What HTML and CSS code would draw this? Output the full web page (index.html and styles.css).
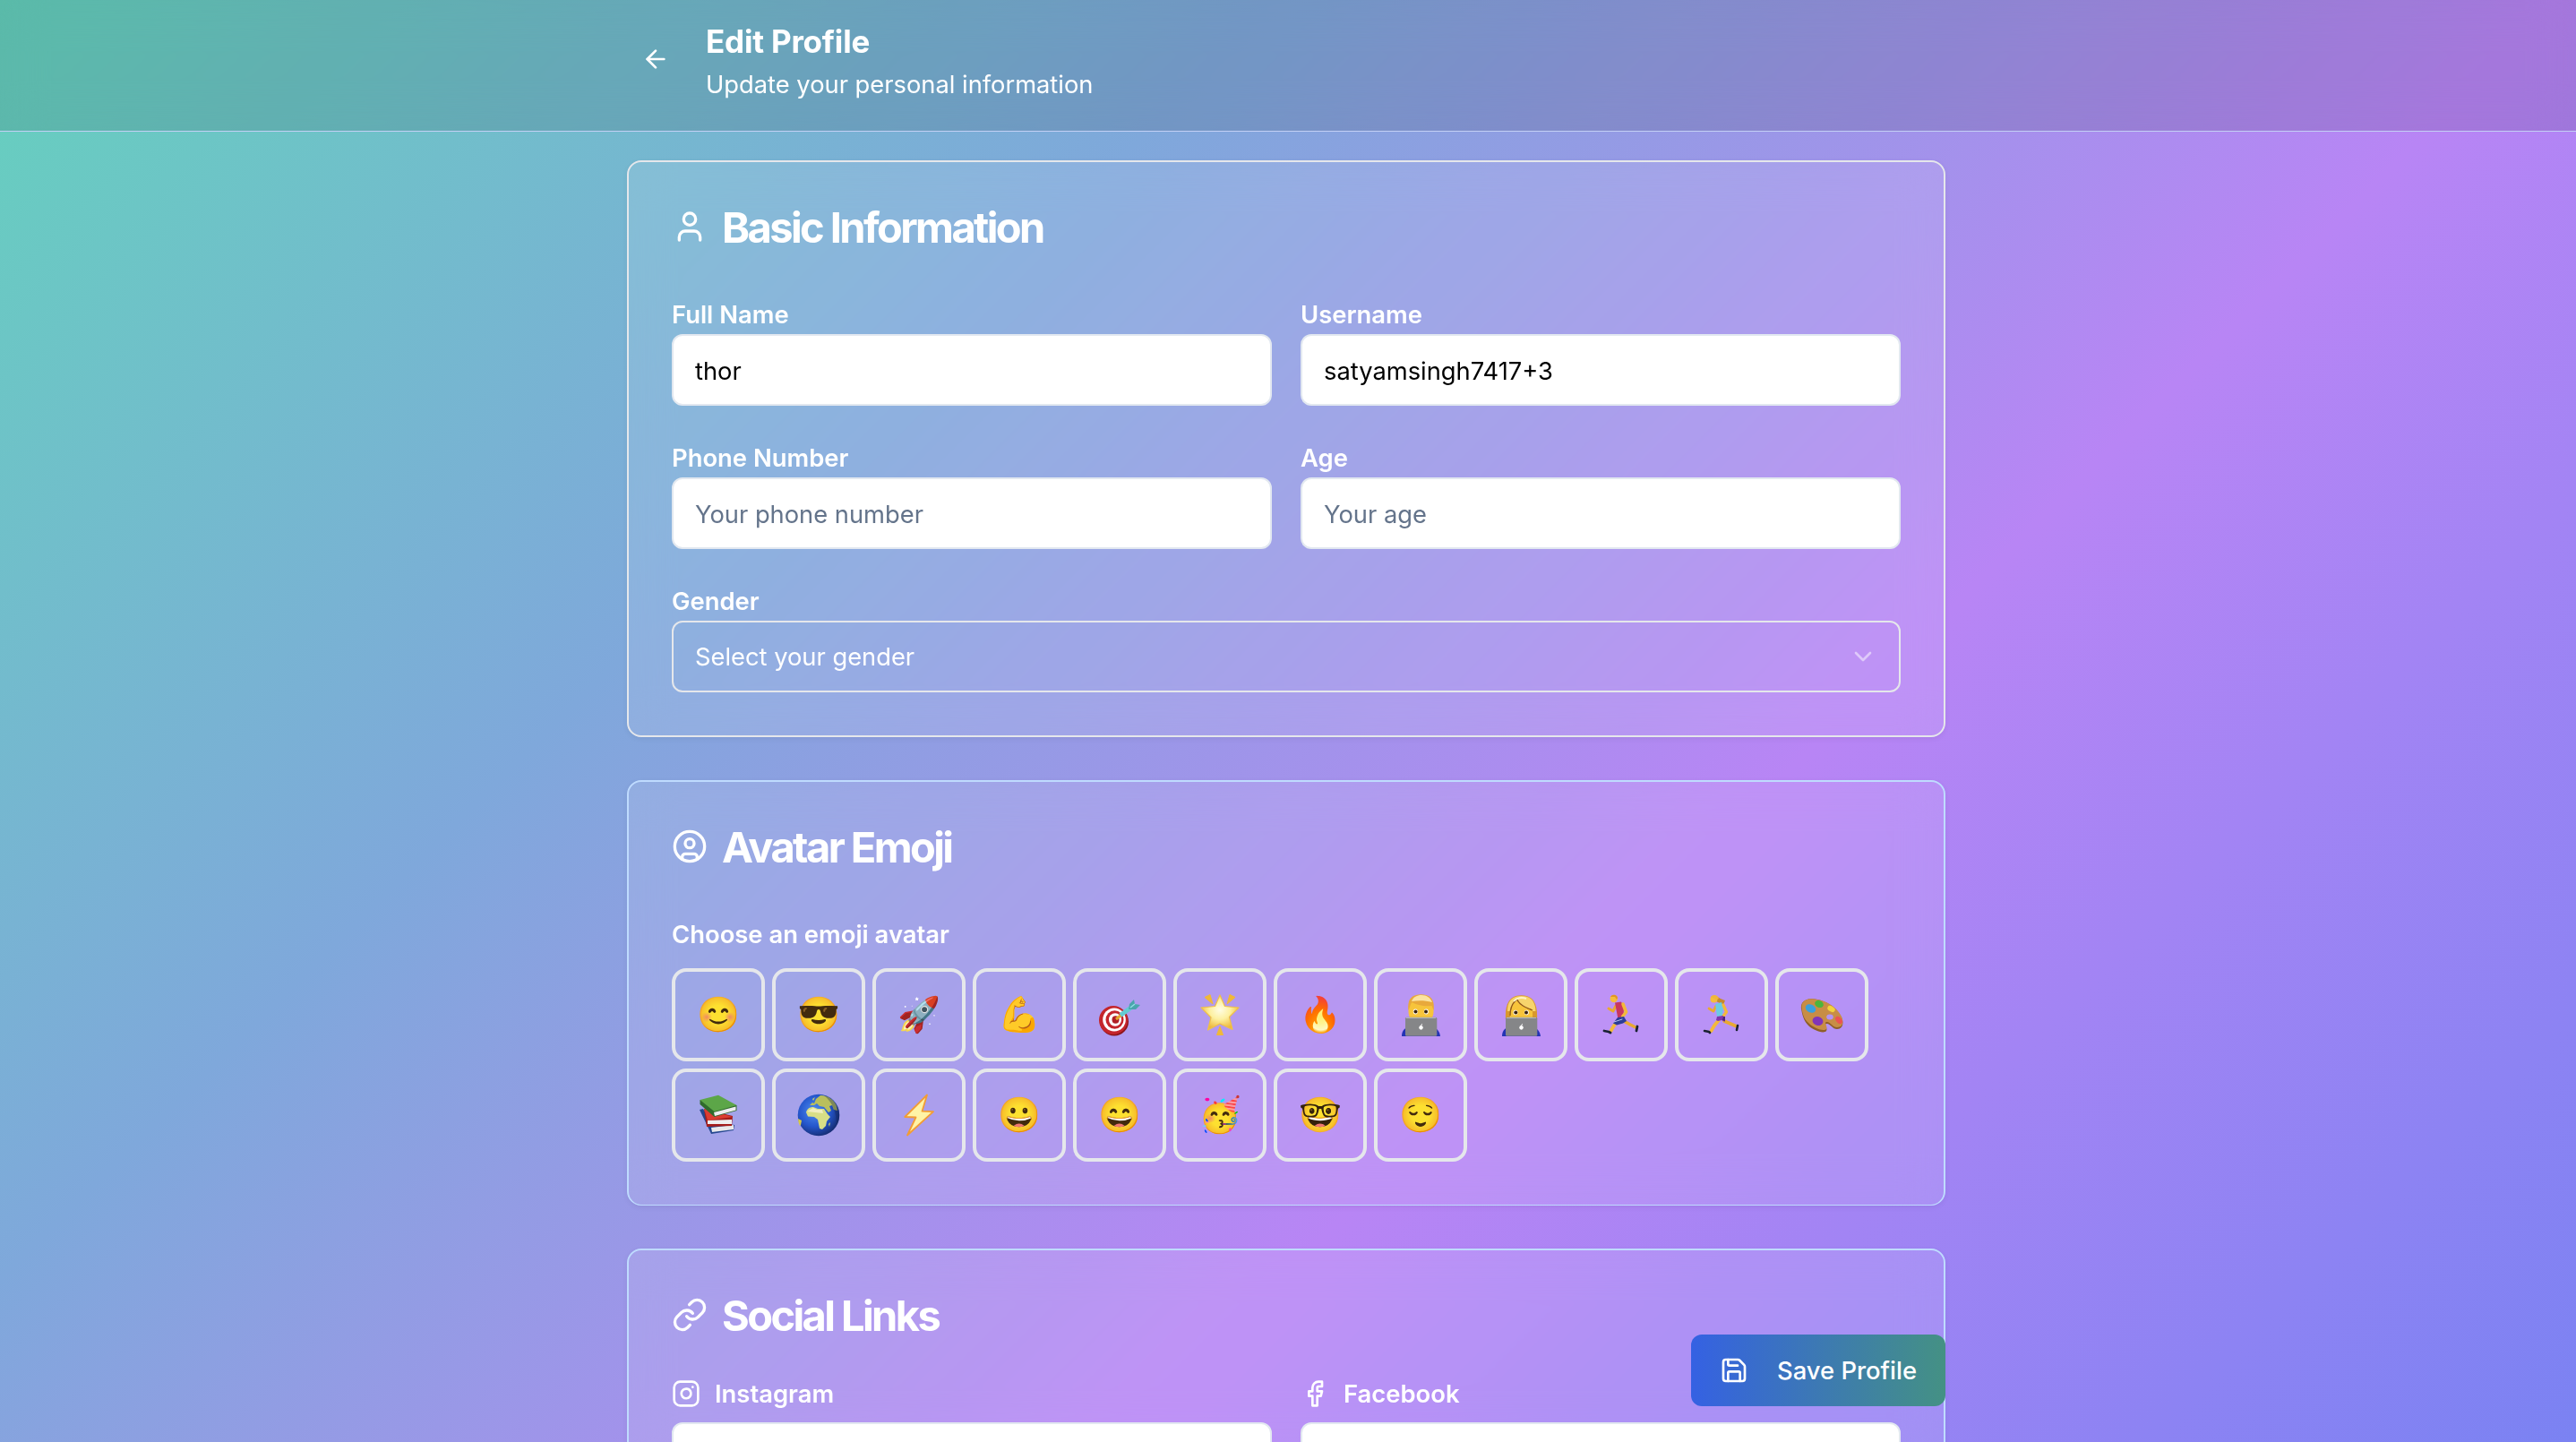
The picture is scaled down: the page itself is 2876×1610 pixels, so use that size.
FILE: index.html
```
<!DOCTYPE html>
<html lang="en">
<head>
<meta charset="utf-8">
<title>Edit Profile</title>
<link rel="stylesheet" href="styles.css">
</head>
<body>
<div class="page">
  <header class="topbar">
    <div class="topbar-inner">
      <button class="back" aria-label="Back">
        <svg class="icon icon-32" viewBox="0 0 24 24"><path d="m12 19-7-7 7-7"/><path d="M19 12H5"/></svg>
      </button>
      <div>
        <h1 class="title">Edit Profile</h1>
        <p class="subtitle">Update your personal information</p>
      </div>
    </div>
  </header>

  <main class="content">
    <section class="card card-basic">
      <h2 class="card-title">
        <svg class="icon icon-40" viewBox="0 0 24 24"><path d="M19 21v-2a4 4 0 0 0-4-4H9a4 4 0 0 0-4 4v2"/><circle cx="12" cy="7" r="4"/></svg>
        <span>Basic Information</span>
      </h2>
      <div class="fields">
        <label class="field"><span class="label">Full Name</span><input class="input" type="text" value="thor"></label>
        <label class="field"><span class="label">Username</span><input class="input" type="text" value="satyamsingh7417+3"></label>
        <label class="field"><span class="label">Phone Number</span><input class="input" type="text" placeholder="Your phone number"></label>
        <label class="field"><span class="label">Age</span><input class="input" type="text" placeholder="Your age"></label>
        <div class="field field-wide">
          <span class="label">Gender</span>
          <div class="select">
            <span>Select your gender</span>
            <svg class="icon icon-32 chevron" viewBox="0 0 24 24"><path d="m6 9 6 6 6-6"/></svg>
          </div>
        </div>
      </div>
    </section>

    <section class="card card-avatar">
      <h2 class="card-title">
        <svg class="icon icon-40" viewBox="0 0 24 24"><circle cx="12" cy="12" r="10"/><circle cx="12" cy="10" r="3"/><path d="M7 20.662V19a2 2 0 0 1 2-2h6a2 2 0 0 1 2 2v1.662"/></svg>
        <span>Avatar Emoji</span>
      </h2>
      <span class="label label-emoji">Choose an emoji avatar</span>
      <div class="emojis">
        <button class="emoji">😊</button>
        <button class="emoji">😎</button>
        <button class="emoji">🚀</button>
        <button class="emoji">💪</button>
        <button class="emoji" aria-label="🎯">
          <svg class="art" viewBox="0 0 48 48">
            <ellipse cx="18" cy="31.500" rx="16" ry="16" fill="#8c1519"/>
            <ellipse cx="17" cy="30" rx="16" ry="16" fill="#c4252b"/>
            <ellipse cx="18" cy="29.500" rx="12.800" ry="13" fill="#fff"/>
            <ellipse cx="18.500" cy="29.500" rx="10" ry="10.300" fill="#c4252b"/>
            <ellipse cx="19" cy="29.500" rx="7" ry="7.300" fill="#fff"/>
            <ellipse cx="19.500" cy="29.500" rx="4" ry="4.200" fill="#b01f25"/>
            <path d="m20 29 6-5" stroke="#e5a72c" stroke-width="3"/>
            <path d="m25 24.500 11-8" stroke="#64cbd3" stroke-width="5"/>
            <path d="m34 18 1-6 5-5 1 5 6 1-5 5Z" fill="#4aa5ad"/>
            <path d="m36 16 5-4" stroke="#90e0e4" stroke-width="1.500"/>
          </svg>
        </button>
        <button class="emoji" aria-label="🌟">
          <svg class="art" viewBox="0 0 48 48">
            <defs><radialGradient id="star" cx=".5" cy=".42" r=".55"><stop offset="0" stop-color="#fffde4"/><stop offset=".5" stop-color="#fdf0a0"/><stop offset="1" stop-color="#eeb93c"/></radialGradient></defs>
            <path d="m7 4.500 6-3 3 10.500Zm34 0-6-3L32 12ZM20.500 46.500 24 37l3.500 9.500Z" fill="#f0b838" stroke="#f0b838" stroke-linejoin="round"/>
            <path d="m24 2 5.500 12.500L45 16 34.500 26.500 38 40.500l-14-6.500-13.500 7L14 27 3 16l15.500-1.500Z" fill="url(#star)" stroke="#efc048" stroke-width="1.200" stroke-linejoin="round"/>
          </svg>
        </button>
        <button class="emoji">🔥</button>
        <button class="emoji" aria-label="👨‍💻">
          <svg class="art" viewBox="0 0 48 48">
            <path d="M3 48c0-7 4-10 10-11h22c6 1 10 4 11 11Z" fill="#2433b5"/>
            <rect x="10.500" y="6" width="28" height="27" rx="12" fill="#f7c43b"/>
            <path d="M10.500 19C9 8 13 1.300 24.500 1.300S40 8 38.500 19l-2-5c-8 1-17-1-22-4-2 2-2 5-4 9Z" fill="#e8a93b"/>
            <path d="M14 9c2-5 6-7 11-7 6 0 10 3 12 8-8-2-15-2-23-1Z" fill="#fbe3a0"/>
            <ellipse cx="18.300" cy="20.500" rx="2.500" ry="3" fill="#fff"/><ellipse cx="30.300" cy="20.500" rx="2.500" ry="3" fill="#fff"/>
            <circle cx="18.500" cy="20.500" r="2" fill="#3a230c"/><circle cx="30" cy="20.500" r="2" fill="#3a230c"/>
            <rect x="7" y="26.700" width="35.300" height="21" rx="1.500" fill="#858688"/>
            <path d="M8 27.500h33" stroke="#b5b6b8" stroke-width="1.200"/>
            <ellipse cx="24.500" cy="38.300" rx="2.200" ry="2.400" fill="#fff"/><path d="m24.500 36 1.200-1.800" stroke="#fff"/>
          </svg>
        </button>
        <button class="emoji" aria-label="👩‍💻">
          <svg class="art" viewBox="0 0 48 48">
            <path d="M3 48c0-7 4-10 10-11h22c6 1 10 4 11 11Z" fill="#2433b5"/>
            <path d="M7 29C6 12 11 2.300 24.500 2.300S43 12 42 29Z" fill="#d9982c"/>
            <path d="M9 20C9 9 14 3 24.500 3S40 9 40.500 20Z" fill="#f7d46c"/>
            <path d="M12 28c-1-9 2-16 8-20 2 6 10 8 17 11v9Z" fill="#f7c43b"/>
            <path d="M20 7c2 6 10 9 17 12M20 7c-5 3-8 9-8 18" fill="none" stroke="#8f5517" stroke-width="1.300"/>
            <path d="M16 9c3-4 9-5 14-3" fill="none" stroke="#fff3c4" stroke-width="2"/>
            <ellipse cx="18" cy="21.500" rx="2.500" ry="2.800" fill="#fff"/><ellipse cx="30.300" cy="21.500" rx="2.500" ry="2.800" fill="#fff"/>
            <circle cx="18.300" cy="21.500" r="2" fill="#3a230c"/><circle cx="30" cy="21.500" r="2" fill="#3a230c"/>
            <rect x="7" y="26.700" width="35.300" height="21" rx="1.500" fill="#858688"/>
            <path d="M8 27.500h33" stroke="#b5b6b8" stroke-width="1.200"/>
            <ellipse cx="24.500" cy="38.300" rx="2.200" ry="2.400" fill="#fff"/><path d="m24.500 36 1.200-1.800" stroke="#fff"/>
          </svg>
        </button>
        <button class="emoji" aria-label="🏃‍♂️">
          <svg class="art" viewBox="0 0 48 48" fill="none" stroke-linecap="round" stroke-linejoin="round">
            <path d="m18 14-3 6-5-3" stroke="#e9a931" stroke-width="3"/>
            <path d="m27 31 7 4 6 3" stroke="#e9a931" stroke-width="3.600"/>
            <path d="m20 32-4 4-3.500 6" stroke="#f3b93a" stroke-width="3.800"/>
            <path d="m17 10.500 7-1 3 6-.500 12-6 1.500Z" fill="#c9375f"/>
            <path d="m26 12 3.500 9-4 5" stroke="#f3b93a" stroke-width="3.600"/>
            <path d="m20 27 7-1 3 5-4 2.500-7 2-4-2Z" fill="#2b3d97"/>
            <path d="m16 32 9-3" stroke="#b7c4ea" stroke-width="1"/>
            <circle cx="15.800" cy="6" r="4.200" fill="#f5bd3c"/><path d="M12 4c2-3 7-3 8 1l-1 2-2-3Z" fill="#e09524"/>
            <path d="m5 42 5 1 2 1M42 37l-1 5" stroke="#1b2233" stroke-width="2.800"/>
          </svg>
        </button>
        <button class="emoji" aria-label="🏃‍♀️">
          <svg class="art" viewBox="0 0 48 48" fill="none" stroke-linecap="round" stroke-linejoin="round">
            <path d="M17 3c5 2 7 4 11 5l-2 5-8-4Z" fill="#c68a2c"/>
            <path d="m18 14-3 6-5-3" stroke="#e9a931" stroke-width="2.800"/>
            <path d="m27 31 7 3 7 3" stroke="#e9a931" stroke-width="3.600"/>
            <path d="m21 30-5 6-3.500 6" stroke="#f3b93a" stroke-width="3.800"/>
            <path d="m17 12 7-2 2 6-1 9-6 1Z" fill="#6ccbe4"/>
            <path d="m26 13 3.500 8-4 5" stroke="#f3b93a" stroke-width="3.200"/>
            <path d="m19 26 7-1 2 7-4-2-4 1-2-1Z" fill="#7e35ad"/>
            <path d="m26 26 2 0 0 5-3-1Z" fill="#4c2378"/>
            <circle cx="15.500" cy="6.500" r="4" fill="#f5bd3c"/><path d="M12 4c2-3 8-3 9 2l-3 1Z" fill="#efb63c"/>
            <path d="m5 42 5 1 1 1M42 36l-1 5" stroke="#1b2233" stroke-width="2.600"/>
          </svg>
        </button>
        <button class="emoji" aria-label="🎨">
          <svg class="art" viewBox="0 0 48 48">
            <path d="M1 17C0 9 7 5 16 6.500 28 8 40 15 46 27c3 7 1 13-5 13-5 0-8-7-12-6-3 1 2 5 0 8-3 4-15-1-20-6C4 31 2 24 1 17Z" fill="#8f5f26"/>
            <path d="M1.500 15.500C1 9 7 5 16 6.500 28 8 40 14 46 26c3 7 1 12-5 12-5 0-8-7-12-6-3 1 2 5 0 8-3 3-14-1-20-7C4 29 2 22 1.500 15.500Z" fill="#c88d45"/>
            <ellipse cx="33" cy="26.500" rx="3.800" ry="3" fill="#b393f3"/>
            <ellipse cx="11.500" cy="17" rx="6" ry="4.500" transform="rotate(25 11.500 17)" fill="#3aa0dc"/>
            <ellipse cx="21" cy="12" rx="5" ry="3.800" transform="rotate(25 21 12)" fill="#4bb53c"/>
            <ellipse cx="34.500" cy="17.500" rx="4.500" ry="3" transform="rotate(30 34.500 17.500)" fill="#f2d23e"/>
            <ellipse cx="43" cy="30" rx="4.800" ry="3" transform="rotate(50 43 30)" fill="#ec5350"/>
            <ellipse cx="19.500" cy="31" rx="6" ry="4.800" transform="rotate(15 19.500 31)" fill="#8135b8"/>
          </svg>
        </button>
        <button class="emoji" aria-label="📚">
          <svg class="art" viewBox="0 0 48 48">
            <path d="m3 18 4-1 9 15 26 3-1 6-25 4Z" fill="#24478f"/>
            <path d="m16 38 25-3v5l-24 3Z" fill="#e8e8ea"/>
            <path d="m8 17 32 8-1 11-28 1Z" fill="#a51d1c"/>
            <path d="m8 17 32 9-28 4Z" fill="#db3c31"/>
            <path d="m12 30 27-1v5H12Z" fill="#eeeeef"/>
            <path d="M3.500 7v5l16 14 25-7V13Z" fill="#2f6b2c"/>
            <path d="M3.500 7 24 1.700 44.500 13l-25 7Z" fill="#5ca648"/>
            <path d="m19 21 24.500-6.500v4L20 25Z" fill="#eeeeef"/>
          </svg>
        </button>
        <button class="emoji" aria-label="🌍">
          <svg class="art" viewBox="0 0 48 48">
            <defs><radialGradient id="sea" cx=".4" cy=".4" r=".62"><stop offset="0" stop-color="#4f8df0"/><stop offset=".6" stop-color="#2456cc"/><stop offset="1" stop-color="#172f78"/></radialGradient></defs>
            <circle cx="24" cy="24" r="23.300" fill="url(#sea)"/>
            <path d="M10 21c1-4 4-6 8-6l5 2 7 0 4 6 3 3-4 5-1 5-4 4-3-1-2-10-4-3-7-.500Z" fill="#d8de86"/>
            <path d="m11 20 7-4 4 2 6 0 1 4Z" fill="#f1eec0"/>
            <path d="m14 13 3-3 2 1 2-5 5-4c9 0 15 5 18 12l1 5-4-1-2-5-3 1 2 5-3 2-5-6-5-1-3-3-3 2Z" fill="#b9bf5c"/>
            <path d="m17 6 3-2-2 4Z" fill="#c7cf6e"/><path d="m1 28 4 2-1 5-1 1q-2-4-2-8Z" fill="#d6c94a"/><path d="m35 34 2-2-1 5Z" fill="#c8ce72"/>
            <path d="M30 2c10 3 17 12 17 22 0 4-1 7-3 11 0-13-4-25-14-33Z" fill="#102354" opacity=".35"/>
          </svg>
        </button>
        <button class="emoji" aria-label="⚡">
          <svg class="art" viewBox="0 0 48 48"><path d="M33 1.500 8.300 26l12.200.500L11 46.500l29-26.300-12.500-.500Z" fill="#fff3a6" stroke="#f29c35" stroke-width="1.800" stroke-linejoin="round"/></svg>
        </button>
        <button class="emoji">😀</button>
        <button class="emoji">😄</button>
        <button class="emoji">🥳</button>
        <button class="emoji">🤓</button>
        <button class="emoji">😌</button>
      </div>
    </section>

    <section class="card card-social">
      <h2 class="card-title">
        <svg class="icon icon-40" viewBox="0 0 24 24"><path d="M10 13a5 5 0 0 0 7.540.540l3-3a5 5 0 0 0-7.070-7.070l-1.720 1.710"/><path d="M14 11a5 5 0 0 0-7.540-.540l-3 3a5 5 0 0 0 7.070 7.070l1.710-1.710"/></svg>
        <span>Social Links</span>
      </h2>
      <div class="fields fields-social">
        <label class="field">
          <span class="label label-icon"><svg class="icon icon-32" viewBox="0 0 24 24"><rect x="2" y="2" width="20" height="20" rx="5"/><path d="M16 11.370A4 4 0 1 1 12.630 8 4 4 0 0 1 16 11.370z"/><path d="M17.500 6.500h.01"/></svg>Instagram</span>
          <input class="input" type="text">
        </label>
        <label class="field">
          <span class="label label-icon"><svg class="icon icon-32" viewBox="0 0 24 24"><path d="M18 2h-3a5 5 0 0 0-5 5v3H7v4h3v8h4v-8h3l1-4h-4V7a1 1 0 0 1 1-1h3z"/></svg>Facebook</span>
          <input class="input" type="text">
        </label>
      </div>
    </section>
  </main>

  <div class="save-bar">
    <button class="save">
      <svg class="icon icon-32" viewBox="0 0 24 24"><path d="M15.200 3a2 2 0 0 1 1.400.600l3.800 3.800a2 2 0 0 1 .600 1.400V19a2 2 0 0 1-2 2H5a2 2 0 0 1-2-2V5a2 2 0 0 1 2-2z"/><path d="M17 21v-7a1 1 0 0 0-1-1H8a1 1 0 0 0-1 1v7"/><path d="M7 3v4a1 1 0 0 0 1 1h7"/></svg>
      <span>Save Profile</span>
    </button>
  </div>
</div>
</body>
</html>
```
FILE: styles.css
```
* { box-sizing: border-box; }

body {
  margin: 0;
  font-family: Inter, "Liberation Sans", sans-serif;
  color: #fff;
}

button {
  font-family: inherit;
  color: inherit;
  background: none;
  border: 0;
  padding: 0;
}

h1, h2, p { margin: 0; }

.page {
  position: relative;
  height: 1610px;
  overflow: hidden;
  background: linear-gradient(135deg, #65d1bd 0, #7fa8db 1010px, #b885f5 2020px, #4c80f0 4040px);
}

.icon {
  flex: none;
  fill: none;
  stroke: currentColor;
  stroke-width: 2;
  stroke-linecap: round;
  stroke-linejoin: round;
}
.icon-32 { width: 32px; height: 32px; }
.icon-40 { width: 40px; height: 40px; }

/* Header */
.topbar {
  height: 147px;
  padding: 18px 4px 0 0;
  background: rgba(0, 0, 0, 0.1);
  border-bottom: 1px solid #c3d0f5;
  backdrop-filter: blur(24px);
}
.topbar-inner {
  display: flex;
  align-items: center;
  gap: 24px;
  width: 1472px;
  margin: 0 auto;
}
.back {
  display: flex;
  align-items: center;
  justify-content: center;
  width: 64px;
  height: 64px;
  padding-bottom: 1px;
}
.title {
  font-size: 35px;
  font-weight: 700;
  letter-spacing: -0.2px;
  line-height: 56px;
}
.subtitle {
  font-size: 27.3px;
  line-height: 41px;
}

/* Cards */
.content {
  display: flex;
  flex-direction: column;
  gap: 48px;
  padding: 32px 4px 0 0;
}
.card {
  flex: none;
  width: 1472px;
  margin: 0 auto;
  padding: 48px;
  border: 2px solid #bfdbfe;
  border-radius: 16px;
  background: rgba(255, 255, 255, 0.11);
  background-clip: padding-box;
  backdrop-filter: blur(24px);
  box-shadow: 0 2px 6px rgba(0, 0, 0, 0.06);
}
.card-basic { border-color: #e5e7eb; }
.card-avatar { border-bottom-width: 1px; }
.card-social { height: 600px; }
.card-title {
  display: flex;
  align-items: center;
  gap: 16px;
  height: 48px;
  font-size: 47px;
  font-weight: 700;
  letter-spacing: -2.6px;
  line-height: 48px;
}
.card-title span { padding-top: 1px; }

/* Form fields */
.fields {
  display: grid;
  grid-template-columns: 1fr 1fr;
  gap: 36px 32px;
  margin-top: 52px;
}
.fields-social { margin-top: 42px; }
.field {
  display: flex;
  flex-direction: column;
}
.field-wide { grid-column: 1 / -1; }
.label {
  font-size: 27.4px;
  font-weight: 580;
  line-height: 44px;
}
.label-icon {
  display: flex;
  align-items: center;
  gap: 16px;
  margin-bottom: 10px;
}
.input, .select {
  width: 100%;
  height: 80px;
  padding: 2px 24px 0;
  border: 2px solid #e2e8f0;
  border-radius: 12px;
  font-family: inherit;
  font-size: 27.3px;
}
.input {
  background: #fff;
  color: #000;
}
.input::placeholder { color: #64748b; opacity: 1; }
.select {
  display: flex;
  align-items: center;
  justify-content: space-between;
  padding-top: 0;
  border-color: #e5e7eb;
}
.chevron { opacity: 0.5; }

/* Emoji picker */
.label-emoji {
  display: block;
  margin: 52px 0 16px;
}
.emojis {
  display: flex;
  flex-wrap: wrap;
  gap: 8px;
}
.emoji {
  display: flex;
  align-items: center;
  justify-content: center;
  width: 104px;
  height: 104px;
  padding-bottom: 1px;
  border: 4px solid #e5e7eb;
  border-radius: 16px;
  font-size: 38.5px;
  line-height: 1;
}
.art {
  width: 48px;
  height: 48px;
}

/* Floating save action */
.save-bar {
  position: absolute;
  left: 0;
  right: 4px;
  bottom: 40px;
  display: flex;
  justify-content: flex-end;
  width: 1472px;
  margin: 0 auto;
}
.save {
  display: flex;
  align-items: center;
  gap: 32px;
  width: 284px;
  height: 80px;
  padding: 0 32px;
  border-radius: 12px;
  background: linear-gradient(90deg, #3561e3, #449184);
  font-size: 27.4px;
  font-weight: 550;
  white-space: nowrap;
}
```
